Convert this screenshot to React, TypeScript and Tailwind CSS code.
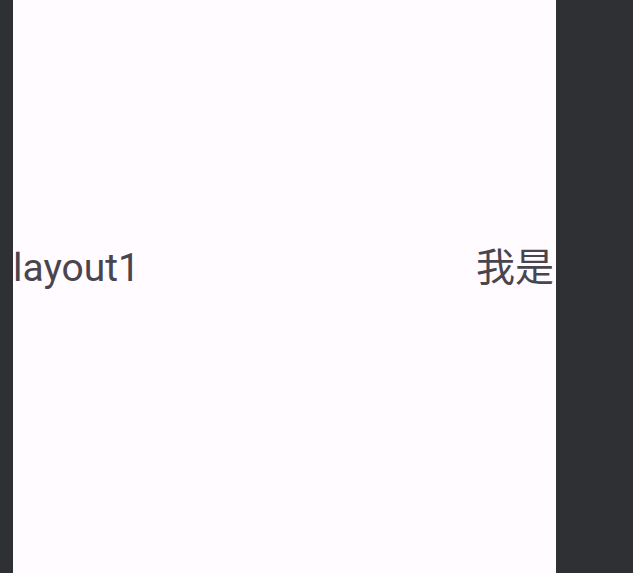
export default function App() {
  return (
    <div className="flex h-[573px] w-[633px] bg-[#2f3033] pl-[13px]">
      <div className="h-full w-[543px] overflow-hidden bg-[#fffbfe] pt-[245px]">
        <div className="flex items-center justify-between pr-[2px] font-['Roboto','Noto_Sans_CJK_SC',sans-serif] text-[39px] leading-[46px] text-[#49454f]">
          <span>layout1</span>
          <span>我是</span>
        </div>
      </div>
    </div>
  );
}
